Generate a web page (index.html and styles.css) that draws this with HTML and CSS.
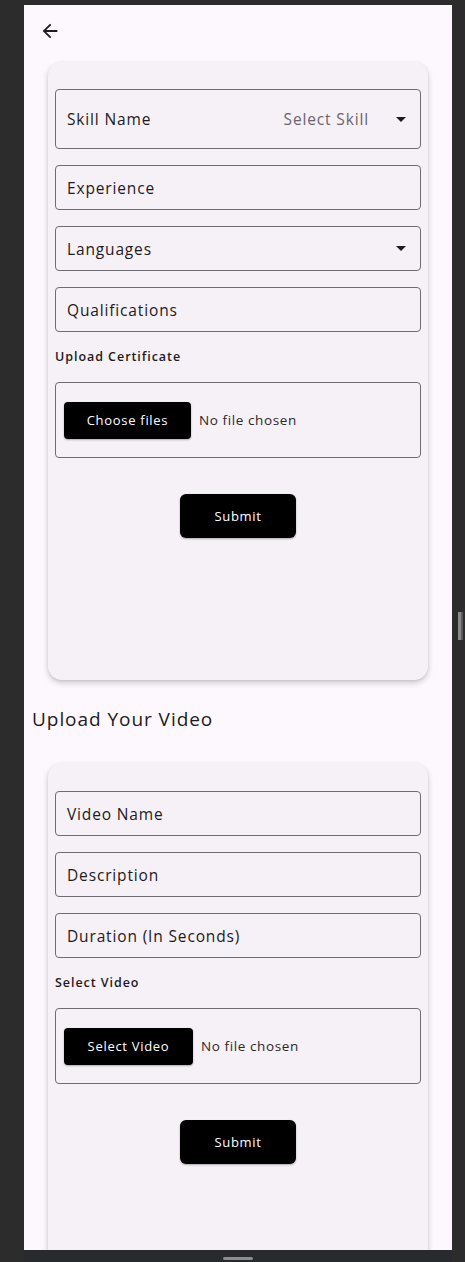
FILE: index.html
```html
<!DOCTYPE html>
<html>
<head>
<meta charset="utf-8">
<link rel="stylesheet" href="styles.css">
</head>
<body>
<div class="topstrip"></div>
<div class="row">
  <div class="frame">
    <div class="appbar">
      <svg class="back" width="22" height="22" viewBox="0 0 24 24"><path d="M20 11H7.83l5.59-5.59L12 4l-8 8 8 8 1.41-1.41L7.83 13H20v-2z" fill="#1d1b20"/></svg>
    </div>
    <div class="card card1">
      <div class="field tall">
        <span class="flabel">Skill Name</span>
        <span class="hint">Select Skill</span>
        <span class="caret"></span>
      </div>
      <div class="field"><span class="flabel">Experience</span></div>
      <div class="field"><span class="flabel">Languages</span><span class="spacer"></span><span class="caret"></span></div>
      <div class="field"><span class="flabel">Qualifications</span></div>
      <div class="label">Upload Certificate</div>
      <div class="filebox">
        <span class="filebtn">Choose files</span>
        <span class="nofile">No file chosen</span>
      </div>
      <div class="submitrow"><span class="submit">Submit</span></div>
    </div>
    <h2 class="heading">Upload Your Video</h2>
    <div class="card card2">
      <div class="field"><span class="flabel">Video Name</span></div>
      <div class="field"><span class="flabel">Description</span></div>
      <div class="field"><span class="flabel">Duration (In Seconds)</span></div>
      <div class="label">Select Video</div>
      <div class="filebox">
        <span class="filebtn vid">Select Video</span>
        <span class="nofile">No file chosen</span>
      </div>
      <div class="submitrow"><span class="submit">Submit</span></div>
    </div>
  </div>
  <div class="gutter"><span class="grip"></span></div>
</div>
<div class="bottombar"><span class="handle"></span></div>
</body>
</html>
```
FILE: styles.css
```css
* { box-sizing: border-box; }
html, body { margin: 0; padding: 0; }
body {
  background: #2c2c2c;
  font-family: "Open Sans", "Noto Sans", sans-serif;
  color: #1d1b20;
  width: 465px;
  height: 1262px;
  overflow: hidden;
}
.topstrip { height: 5px; }
.row { display: flex; height: 1245px; padding-left: 24px; }
.frame {
  width: 428px;
  height: 1245px;
  background: #fdf7fe;
  overflow: hidden;
}
.gutter { flex: 1; display: flex; justify-content: center; align-items: flex-start; padding-top: 607px; padding-left: 1px; }
.grip { width: 3px; height: 28px; background: #8a8a8a; box-shadow: 2px 0 0 #5a5a5a; }
.appbar { height: 57px; padding: 15px 0 0 15px; }
.back { display: block; }
.card {
  margin-left: 24px;
  width: 380px;
  background: #f6f0f7;
  border-radius: 14px;
  box-shadow: 0 3px 6px rgba(0,0,0,0.18), 0 1px 3px rgba(0,0,0,0.08);
  padding: 27px 7px 0 7px;
  display: flex;
  flex-direction: column;
}
.card1 { height: 618px; }
.card2 { height: 520px; padding-top: 28px; }
.field {
  height: 45px;
  border: 1px solid #6f6b72;
  border-radius: 4px;
  display: flex;
  align-items: center;
  padding: 0 14px 0 11px;
  margin-bottom: 16px;
  font-size: 15.5px;
  letter-spacing: 0.85px;
}
.field.tall { height: 60px; }
.flabel { flex: none; }
.spacer { flex: 1; }
.hint { flex: 1; text-align: right; color: #6a666d; margin-right: 27px; }
.caret {
  width: 0; height: 0;
  border-left: 5px solid transparent;
  border-right: 5px solid transparent;
  border-top: 5px solid #1d1b20;
}
.label {
  font-size: 12.5px;
  font-weight: 600;
  margin: 0 0 17px 0;
  height: 17px;
  line-height: 17px;
  letter-spacing: 0.95px;
}
.filebox {
  height: 76px;
  border: 1px solid #6f6b72;
  border-radius: 4px;
  display: flex;
  align-items: center;
  padding-left: 8px;
}
.filebtn {
  width: 127px;
  height: 37px;
  background: #000;
  color: #fff;
  border-radius: 4px;
  display: flex;
  align-items: center;
  justify-content: center;
  font-size: 13px;
  letter-spacing: 0.7px;
  box-shadow: 0 1px 2px rgba(0,0,0,0.3);
}
.filebtn.vid { width: 129px; }
.nofile { font-size: 13.5px; margin-left: 8px; color: #2a282c; letter-spacing: 0.6px; }
.submitrow { display: flex; justify-content: center; margin-top: 36px; }
.submit {
  width: 116px;
  height: 44px;
  background: #000;
  color: #fff;
  border-radius: 6px;
  display: flex;
  align-items: center;
  justify-content: center;
  font-size: 13px;
  letter-spacing: 0.7px;
  box-shadow: 0 1px 2px rgba(0,0,0,0.3);
}
.heading {
  margin: 0;
  padding: 27px 0 0 8px;
  height: 83px;
  font-size: 19px;
  font-weight: 500;
  line-height: 24px;
  letter-spacing: 0.95px;
}
.bottombar {
  height: 12px;
  margin-left: 24px;
  width: 428px;
  background: #292a2d;
  display: flex;
  justify-content: center;
  padding-top: 7px;
}
.handle { width: 30px; height: 3px; background: #8d8d8d; border-radius: 2px; }
```
